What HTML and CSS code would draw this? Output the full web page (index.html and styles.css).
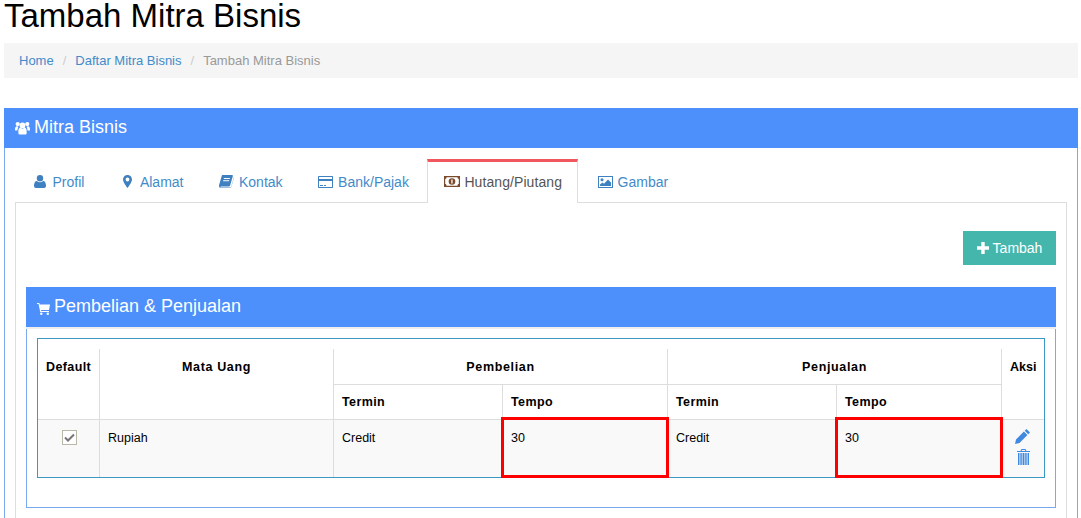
FILE: index.html
```html
<!DOCTYPE html>
<html lang="id">
<head>
<meta charset="utf-8">
<title>Tambah Mitra Bisnis</title>
<link rel="stylesheet" href="styles.css">
</head>
<body>
<div class="page">
  <h1 class="title">Tambah Mitra Bisnis</h1>
  <ol class="crumbs">
    <li><a href="#">Home</a></li>
    <li class="sep">/</li>
    <li><a href="#">Daftar Mitra Bisnis</a></li>
    <li class="sep">/</li>
    <li class="current">Tambah Mitra Bisnis</li>
  </ol>
  <section class="panel outer">
    <header class="panel-head">
      <svg class="ic-users" viewBox="0 0 16 14"><circle cx="8" cy="4.200" r="3.100"/><circle cx="2.900" cy="2.800" r="2.300"/><circle cx="13.100" cy="2.800" r="2.300"/><path d="M0 9c0-2 .6-3.800 2-3.800.8 0 1 .4 1.600.6-.5 1-.9 2-.9 3.800H.9C.4 9.600 0 9.500 0 9zM16 9c0-2-.6-3.800-2-3.800-.8 0-1 .4-1.600.6.5 1 .9 2 .9 3.800h2.800c.5 0 .9-.1.9-.6zM3.600 9.800C3.600 8 4.600 6.500 5.800 6.500 6.500 7.300 7.200 7.700 8 7.700s1.500-.4 2.200-1.200c1.200 0 2.200 1.500 2.200 3.300v2.700c0 1-.7 1.500-1.600 1.500H5.200c-.9 0-1.600-.5-1.600-1.500z"/></svg>
      <span>Mitra Bisnis</span>
    </header>
    <div class="outer-body">
      <ul class="tabs">
        <li class="tab"><span class="fw"><svg class="ic-user" viewBox="0 0 12 13"><circle cx="6" cy="3.200" r="3.200"/><path d="M0 11c0-3 1-5 2.800-5 .9.800 2 1.200 3.200 1.200S8.300 6.800 9.200 6c1.800 0 2.800 2 2.800 5 0 1.300-.8 2-2 2H2c-1.200 0-2-.7-2-2z"/></svg></span>Profil</li>
        <li class="tab"><span class="fw"><svg class="ic-marker" viewBox="0 0 9 13"><path fill-rule="evenodd" d="M4.500 0C7 0 9 2 9 4.500 9 7 6 11 4.500 13 3 11 0 7 0 4.500 0 2 2 0 4.500 0zm0 2.600a1.900 1.900 0 1 0 0 3.800 1.900 1.900 0 0 0 0-3.800z"/></svg></span>Alamat</li>
        <li class="tab"><span class="fw"><svg class="ic-book" viewBox="0 0 15 13"><path fill-rule="evenodd" d="M3.500 0H13c.8 0 1 .6.800 1.200l-2.700 9.300c-.2.700-.7 1-1.400 1H2.200c-.6 0-.9.300-.9.600 0 .2.200.4.600.4h9.400c.4 0 .7-.2.900-.7L15 1.800c.3.200-.1 1.100-.1 1.100l-2.500 8.800c-.3.900-.9 1.300-1.800 1.300H2C.8 13 0 12.100 0 11c0-.3 0-.6.100-.9l2.600-9C2.900.4 3 0 3.500 0zM5 3l-.3 1h6l.3-1zM4.300 5.200l-.3 1h6l.3-1z"/></svg></span>Kontak</li>
        <li class="tab"><span class="fw"><svg class="ic-card" viewBox="0 0 15 12"><path fill-rule="evenodd" d="M1 0h13c.6 0 1 .4 1 1v10c0 .6-.4 1-1 1H1c-.6 0-1-.4-1-1V1c0-.6.4-1 1-1zm0 1v2h13V1zm0 4v6h13V5zm1 4h3v1H2zm4 0h2v1H6z"/></svg></span>Bank/Pajak</li>
        <li class="tab active"><span class="fw"><svg class="ic-money" viewBox="0 0 16 11"><path fill="#7a4a2a" d="M0 0h16v11H0z"/><path fill="#fff" d="M2.500 1.300h11c0 1 .8 1.700 1.300 1.700v5c-.8 0-1.300.7-1.300 1.700h-11c0-1-.6-1.700-1.300-1.700V3c.8 0 1.300-.7 1.300-1.700z"/><circle cx="8" cy="5.500" r="3.300" fill="#7a4a2a"/><path fill="#fff" d="M7.300 3.500h1.300v4H7.300z"/></svg></span>Hutang/Piutang</li>
        <li class="tab"><span class="fw"><svg class="ic-image" viewBox="0 0 15 12"><path fill-rule="evenodd" d="M0 0h15v12H0zm1 1v10h13V1z"/><circle cx="4" cy="3.700" r="1.500"/><path d="M2 10V8.500l2.500-2 1.500 1.200L10 3.500l3 3V10z"/></svg></span>Gambar</li>
      </ul>
      <div class="tab-pane">
        <div class="actions">
          <button class="btn" type="button"><svg class="ic-plus" viewBox="0 0 12 12"><path d="M4.300 0h3.400v4.300H12v3.400H7.700V12H4.300V7.700H0V4.300h4.300z"/></svg>Tambah</button>
        </div>
        <section class="panel inner">
          <header class="panel-head">
            <svg class="ic-cart" viewBox="0 0 13 12"><path d="M0 0h2.300l.4 1.500H13l-1 5.500H4l.2 1h7.800v1H3.200L1.600 1H0z"/><circle cx="4.300" cy="10.800" r="1.200"/><circle cx="10.800" cy="10.800" r="1.200"/></svg>
            <span>Pembelian &amp; Penjualan</span>
          </header>
          <div class="inner-body">
            <div class="table-box">
              <table class="grid">
                <colgroup>
                  <col class="c-def"><col class="c-cur"><col class="c-a"><col class="c-b"><col class="c-a"><col class="c-b"><col class="c-act">
                </colgroup>
                <thead>
                  <tr class="r1">
                    <th rowspan="2" class="top">Default</th>
                    <th rowspan="2" class="top wide">Mata Uang</th>
                    <th colspan="2" class="wide">Pembelian</th>
                    <th colspan="2" class="wide">Penjualan</th>
                    <th rowspan="2" class="top last narrow">Aksi</th>
                  </tr>
                  <tr class="r2">
                    <th class="left">Termin</th>
                    <th class="left">Tempo</th>
                    <th class="left">Termin</th>
                    <th class="left">Tempo</th>
                  </tr>
                </thead>
                <tbody>
                  <tr>
                    <td class="center"><span class="check"><svg viewBox="0 0 11 9"><path d="M1 4.500l3 3 6-6" fill="none" stroke="#7a7378" stroke-width="2"/></svg></span></td>
                    <td>Rupiah</td>
                    <td>Credit</td>
                    <td class="marked">30<span class="redbox"></span></td>
                    <td>Credit</td>
                    <td class="marked">30<span class="redbox"></span></td>
                    <td class="center last acts">
                      <svg class="ic-pencil" viewBox="0 0 15 15"><path d="M11.500 0L15 3.500l-1.800 1.800-3.500-3.500zM8.900 2.600l3.500 3.500-7.900 7.900L0 15l1-4.500z"/></svg>
                      <svg class="ic-trash" viewBox="0 0 13 16"><path d="M4.500 0h4l1 2H13v1H0V2h3.500zM5 1L4.700 2h3.600L8 1z" fill-rule="evenodd"/><path d="M1 4h11v10.800c0 .7-.5 1.200-1.200 1.200H2.200C1.500 16 1 15.500 1 14.800z" fill-opacity=".45"/><path d="M1 4h1v12H1zm2.600 0h1v12h-1zm2.400 0h1v12H6zm2.400 0h1v12h-1zM11 4h1v12h-1z"/></svg>
                    </td>
                  </tr>
                </tbody>
              </table>
            </div>
          </div>
        </section>
      </div>
    </div>
  </section>
</div>
</body>
</html>
```
FILE: styles.css
```css
* { box-sizing: border-box; }
html, body { margin: 0; padding: 0; height: 518px; overflow: hidden; background: #fff; }
body { font-family: "Liberation Sans", Arial, sans-serif; font-size: 13px; color: #000; }
.page { padding: 0 3px 0 4px; }

.title { margin: 0; height: 43px; font-size: 33px; font-weight: 400; line-height: 31px; }

.crumbs { display: flex; align-items: center; margin: 0 0 30px; padding: 0 15px; height: 35px; list-style: none; background: #f5f5f5; font-size: 13px; }
.crumbs a { color: #428bca; text-decoration: none; }
.crumbs .sep { color: #ccc; padding: 0 9px; }
.crumbs .current { color: #999; }

.panel { border: 1px solid #7aa9ef; }
.panel-head { display: flex; align-items: center; margin: -1px -1px 0; height: 40px; background: #4d8ffb; color: #fff; font-size: 18px; padding: 0 0 2px 11px; fill: #fff; }
.panel-head svg { flex: none; }
.outer { height: 440px; }
.ic-users { width: 15px; height: 14px; margin-right: 4px; margin-top: 2px; }
.ic-cart { width: 13px; height: 12px; margin-right: 4px; margin-top: 6px; }

.outer-body { padding: 11px 10px 0; }

.tabs { display: flex; margin: 0; padding: 0; list-style: none; color: #428bca; font-size: 14px; height: 44px; }
.tab { display: flex; align-items: center; height: 44px; padding: 1px 16px 0; margin-right: 2px; fill: #3f80c0; }
.tab.active { background: #fff; color: #555; border: 1px solid #ddd; border-top: 3px solid #f0565e; border-bottom: 0; padding: 0 15px 2px; letter-spacing: .08px; position: relative; z-index: 1; }
.fw { display: flex; justify-content: center; align-items: center; width: 18px; margin-right: 3.500px; }
.ic-user { width: 12px; height: 13px; }
.ic-marker { width: 9px; height: 13px; }
.ic-book { width: 15px; height: 13px; }
.ic-card { width: 15px; height: 12px; }
.ic-money { width: 16px; height: 11px; }
.ic-image { width: 15px; height: 12px; }

.tab-pane { margin-top: -1px; border: 1px solid #ddd; padding: 28px 10px 0; height: 400px; }

.actions { display: flex; justify-content: flex-end; margin-bottom: 22px; }
.btn { display: flex; align-items: center; justify-content: center; width: 93px; height: 34px; padding: 0; border: 0; background: #45b6ac; color: #fff; fill: #fff; font: 14px "Liberation Sans", Arial, sans-serif; }
.ic-plus { width: 12px; height: 12px; margin-right: 4px; }

.inner { height: 221px; }
.inner .panel-head { box-shadow: 0 2px 0 #eee; }
.inner-body { padding: 11px 10px 0; }

.table-box { border: 1px solid #3c97c4; padding-top: 10px; }
.grid { width: 1006px; table-layout: fixed; border-collapse: separate; border-spacing: 0; font-size: 12.500px; }
.c-def { width: 62px; } .c-cur { width: 234px; } .c-a { width: 169px; } .c-b { width: 165px; } .c-act { width: 42px; }
.grid th, .grid td { border-right: 1px solid #ddd; border-bottom: 1px solid #ddd; padding: 8px; vertical-align: top; }
.grid .last { border-right: 0; }
.grid th { text-align: center; font-weight: 700; letter-spacing: .4px; line-height: 18px; }
.grid th.left { text-align: left; }
.grid th.wide { letter-spacing: .65px; }
.grid th.narrow { letter-spacing: 0; }
.r1 { height: 36px; }
.r1 th { padding-top: 9px; }
.r2 { height: 35px; }
.grid tbody td { background: #f9f9f9; height: 57px; padding-top: 9px; line-height: 18px; border-bottom: 0; }
.grid td.center { text-align: center; }

.check { display: inline-flex; align-items: center; justify-content: center; width: 15px; height: 15px; margin: 1px 0 0 1px; border: 1px solid #b9b9a8; background: #fff; }
.check svg { width: 11px; height: 9px; }

.marked { position: relative; }
.redbox { position: absolute; left: -2px; right: -2px; top: -3px; bottom: -1px; border: 3px solid #f00; z-index: 2; }

.grid td.acts { padding: 9px 0 0; fill: #3f8ae0; }
.acts svg { display: block; }
.ic-pencil { width: 15px; height: 15px; margin-left: 13px; }
.ic-trash { width: 13px; height: 16px; margin: 5px 0 0 15px; }
```
